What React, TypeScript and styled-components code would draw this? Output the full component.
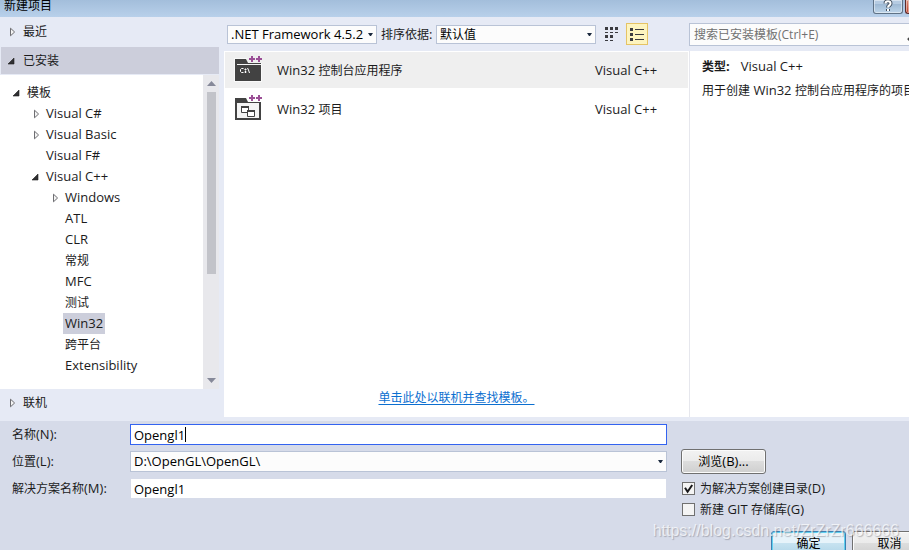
import React from "react";
import styled, { createGlobalStyle, css } from "styled-components";

const GlobalStyle = createGlobalStyle`
  *, *::before, *::after { box-sizing: border-box; }
  body {
    margin: 0;
    overflow: hidden;
    background: #d6dbe9;
  }
  body, button, input, select {
    font-family: "Open Sans", "Noto Sans CJK SC", sans-serif;
    font-size: 13px;
    line-height: 20px;
    color: #1b1b1c;
  }
`;

const Han = styled.span`
  font-size: 12px;
`;

/* Chinese runs are set one pixel smaller than Latin runs. */
function Label({ children }: { children: string }) {
  return (
    <span>
      {children.split(/([\u3000-\u9fff]+)/).map((run, i) =>
        i % 2 ? <Han key={i}>{run}</Han> : run
      )}
    </span>
  );
}

const Dialog = styled.main`
  display: flex;
  flex-direction: column;
  min-height: 100vh;
  overflow: hidden;
  white-space: nowrap;
`;

const TitleBar = styled.header`
  display: flex;
  justify-content: space-between;
  height: 17px;
  padding-left: 4px;
  overflow: hidden;
  background: linear-gradient(#a3bedb, #b8d0ea);
`;

const Title = styled.h1`
  margin: 0;
  font-size: 12px;
  font-weight: 400;
  line-height: 11px;
  color: #000;
`;

const CaptionButtons = styled.div`
  display: flex;
  gap: 2px;
`;

const CaptionButton = styled.button<{ $close?: boolean }>`
  display: flex;
  justify-content: center;
  width: ${(p) => (p.$close ? 4 : 30)}px;
  height: 14px;
  padding: 0;
  border: 1px solid ${(p) => (p.$close ? "#5c2a2a" : "#5f7286")};
  border-top: 0;
  border-right-width: ${(p) => (p.$close ? 0 : 1)}px;
  border-radius: ${(p) => (p.$close ? "0 0 0 3px" : "0 0 3px 3px")};
  background: ${(p) =>
    p.$close
      ? "linear-gradient(#d98874, #c0432c)"
      : "linear-gradient(#b5cbe2 30%, #9db8d3 30%, #bdd5ea)"};
  box-shadow: inset 0 0 0 1px rgba(255, 255, 255, 0.45);
`;

const Content = styled.div`
  display: grid;
  grid-template-columns: 224px minmax(0, 1fr) 220px;
  padding-bottom: 4px;
  background: #e6eaf5;
`;

const Sidebar = styled.nav`
  display: flex;
  flex-direction: column;
  padding-right: 5px;
`;

const Section = styled.button<{ $open?: boolean }>`
  display: flex;
  align-items: center;
  height: ${(p) => (p.$open ? 27 : 29)}px;
  margin: 0 0 1px ${(p) => (p.$open ? 1 : 0)}px;
  padding: 0 0 0 ${(p) => (p.$open ? 5 : 6)}px;
  border: 0;
  background: ${(p) => (p.$open ? "#cccedb" : "transparent")};
  gap: 3px;
`;

const Bottom = styled.div`
  display: flex;
  align-items: center;
  height: 28px;
`;

const TreePane = styled.div`
  display: flex;
  background: #fff;
`;

const Tree = styled.ul`
  flex: 1;
  margin: 0;
  padding: 7px 0 13px;
  list-style: none;
`;

const Node = styled.li<{ $level: number }>`
  display: flex;
  align-items: center;
  height: 21px;
  padding-left: ${(p) => 11 + p.$level * 19}px;
`;

const NodeName = styled.span<{ $selected?: boolean }>`
  height: 21px;
  padding: 0 2px;
  background: ${(p) => (p.$selected ? "#cccedb" : "transparent")};
`;

const ArrowBox = styled.svg`
  flex: none;
  width: 14px;
  height: 10px;
`;

function Arrow({ state }: { state?: "open" | "closed" }) {
  return (
    <ArrowBox viewBox="0 0 14 10" aria-hidden="true">
      {state === "open" && <path d="M8 2v6H2z" fill="#303033" stroke="#1e1e1e" strokeWidth=".6" />}
      {state === "closed" && <path d="M4.5 1.2v7.6L8.6 5z" fill="#f4f4f4" stroke="#6e6e72" />}
    </ArrowBox>
  );
}

const ScrollBar = styled.div`
  display: flex;
  flex-direction: column;
  align-items: center;
  width: 16px;
  background: #e8e8ec;
`;

const ScrollThumb = styled.div`
  width: 9px;
  height: 182px;
  margin-bottom: auto;
  background: #c2c3c9;
`;

const ScrollArrow = styled.svg`
  width: 9px;
  height: 17px;
  fill: #868999;
`;

const Center = styled.section`
  display: flex;
  flex-direction: column;
`;

const Toolbar = styled.div`
  display: flex;
  align-items: center;
  height: 34px;
  padding-left: 3px;
`;

const Combo = styled.div<{ $width?: number }>`
  display: grid;
  align-items: center;
  flex: none;
  width: ${(p) => (p.$width ? `${p.$width}px` : "100%")};
  > * { grid-area: 1 / 1; }
  > svg {
    justify-self: end;
    width: 5px;
    height: 3px;
    margin-right: 4px;
    fill: #1b293e;
    pointer-events: none;
  }
`;

const fieldBox = css`
  width: 100%;
  margin: 0;
  padding: 0 3px;
  border: 1px solid #b9c3d6;
  border-radius: 0;
  outline: 0;
  background: #fcfcfc;
  color: #000;
`;

const Select = styled.select<{ $han?: boolean; $tall?: boolean }>`
  ${fieldBox}
  appearance: none;
  height: ${(p) => (p.$tall ? 21 : 19)}px;
  line-height: 17px;
  font-size: ${(p) => (p.$han ? 12 : 13)}px;
`;

function DropArrow() {
  return (
    <svg viewBox="0 0 5 3" aria-hidden="true">
      <path d="M0 0h5L3 3H2z" />
    </svg>
  );
}

const SortLabel = styled.label`
  width: 59px;
  padding-left: 4px;
`;

const ViewButton = styled.button<{ $active?: boolean }>`
  display: flex;
  align-items: center;
  justify-content: center;
  width: 22px;
  height: 22px;
  margin-left: ${(p) => (p.$active ? 3 : 5)}px;
  padding: 0;
  border: 1px solid ${(p) => (p.$active ? "#e5c365" : "transparent")};
  background: ${(p) => (p.$active ? "#fdf4bf" : "transparent")};
  svg { flex: none; fill: #3b3b40; }
`;

const TemplatePane = styled.div`
  display: flex;
  flex: 1;
  flex-direction: column;
  padding: 1px 1px 9px;
  background: #fff;
`;

const TemplateList = styled.ul`
  margin: 0;
  padding: 0;
  list-style: none;
`;

const Template = styled.li<{ $selected?: boolean }>`
  display: grid;
  grid-template-columns: 52px minmax(0, 1fr) 93px;
  align-items: center;
  height: 36px;
  margin-bottom: 3px;
  background: ${(p) => (p.$selected ? "#efefef" : "transparent")};
  svg { margin-left: 9px; }
`;

const OnlineLink = styled.a`
  align-self: center;
  margin-top: auto;
  font-size: 12px;
  color: #0c6fd0;
  text-decoration: underline;
  text-underline-offset: 2px;
`;

const Details = styled.aside`
  display: flex;
  flex-direction: column;
  overflow: hidden;
`;

const SearchRow = styled.div`
  display: flex;
  align-items: center;
  height: 34px;
`;

const SearchBox = styled.div`
  display: flex;
  align-items: center;
  flex: none;
  width: 240px;
  height: 23px;
  border: 1px solid #b9c3d6;
  background: #fcfcfc;
`;

const SearchInput = styled.input`
  width: 217px;
  padding: 1px 4px 0;
  border: 0;
  outline: 0;
  background: transparent;
  font-size: 12px;
  &::placeholder { color: #717171; opacity: 1; }
`;

const Description = styled.div`
  flex: 1;
  padding: 5px 0 0 12px;
  border-left: 1px solid #e6e7ed;
  background: #fff;
  p { height: 20px; margin: 0 0 4px; }
  strong { margin-right: 11px; }
`;

const Footer = styled.form`
  display: flex;
  flex: 1;
  gap: 14px;
  height: 129px;
  background: #d6dbe9;
`;

const Fields = styled.div`
  display: grid;
  flex: 1;
  grid-template-columns: 118px minmax(0, 1fr);
  grid-auto-rows: 21px;
  row-gap: 6px;
  align-items: center;
  align-content: start;
  padding: 3px 0 0 12px;
`;

const TextInput = styled.input<{ $focused?: boolean }>`
  ${fieldBox}
  height: 21px;
  background: #fff;
  border-color: ${(p) => (p.$focused ? "#3363f0" : "#d6dbe9")};
  caret-color: transparent;
`;

const NameBox = styled.div`
  position: relative;
`;

const Caret = styled.span`
  position: absolute;
  top: 3px;
  left: 55px;
  width: 1px;
  height: 15px;
  background: #000;
`;

const Side = styled.div`
  position: relative;
  display: flex;
  flex: none;
  flex-direction: column;
  align-items: flex-start;
  width: 228px;
  padding-top: 28px;
`;

const PushButton = styled.button<{ $primary?: boolean; $wide?: boolean }>`
  flex: none;
  width: ${(p) => (p.$wide ? 85 : 75)}px;
  height: 25px;
  padding: 0;
  border: 1px solid ${(p) => (p.$primary ? "#3c7fb1" : "#707070")};
  border-radius: 3px;
  background: ${(p) =>
    p.$primary
      ? "linear-gradient(#e6f3fa 48%, #c6e2f0 50%, #b0d5e8)"
      : "linear-gradient(#f2f2f2, #ebebeb 48%, #dddddd 50%, #cfcfcf)"};
  box-shadow: inset 0 0 0 1px ${(p) => (p.$primary ? "#5fd0f0" : "#fbfbfb")};
  color: #000;
`;

const Checks = styled.div`
  margin: 4px 0 11px 1px;
`;

const Check = styled.label`
  display: flex;
  align-items: center;
  gap: 5px;
  height: 21px;
`;

const CheckInput = styled.input`
  appearance: none;
  width: 13px;
  height: 13px;
  margin: 0;
  border: 1px solid #707070;
  background: #f4f4f4;
`;

const CheckFace = styled.span`
  display: grid;
  > * { grid-area: 1 / 1; }
  > svg { display: none; pointer-events: none; }
  > input:checked + svg { display: block; }
`;

function CheckOption({ text, on }: { text: string; on?: boolean }) {
  return (
    <Check>
      <CheckFace>
        <CheckInput type="checkbox" defaultChecked={on} />
        <svg width="13" height="13" viewBox="0 0 13 13" aria-hidden="true">
          <path d="M3 5.8 5.6 9.8 10.2 3" fill="none" stroke="#17171a" strokeWidth="2" />
        </svg>
      </CheckFace>
      <Label>{text}</Label>
    </Check>
  );
}

const Actions = styled.div`
  display: flex;
  gap: 6px;
  padding-left: 90px;
`;

const Watermark = styled.span`
  position: absolute;
  right: 10px;
  top: 100px;
  font-family: "Liberation Sans", sans-serif;
  font-size: 16px;
  color: rgba(255, 255, 255, 0.7);
  text-shadow: 1px 1px 1px rgba(110, 110, 120, 0.45);
  pointer-events: none;
`;

function PlusPlus() {
  return (
    <path
      d="M17 0h2v2h2v2h-2v2h-2V4h-2V2h2zM24 0h2v2h2v2h-2v2h-2V4h-2V2h2z"
      fill="#9b4f96"
    />
  );
}

function ConsoleIcon() {
  return (
    <svg width="28" height="28" viewBox="0 0 28 28" aria-hidden="true">
      <path d="M0 2h13v5h15v19H0z" fill="#fff" opacity=".6" />
      <path d="M1 3h11l2 4h13v18H1z" fill="#424242" />
      <path d="M3 8.500h24" stroke="#f4f4f4" />
      <path d="M14 0h14v7H15z" fill="#efefef" />
      <PlusPlus />
      <path
        d="M9.500 12.500h-2l-1 1v2l1 1h2M11 13h1v1h-1zM11 15.500h1v1h-1zM13.500 12l1 2 1 3"
        fill="none"
        stroke="#fff"
      />
    </svg>
  );
}

function ProjectIcon() {
  return (
    <svg width="28" height="28" viewBox="0 0 28 28" aria-hidden="true">
      <path d="M1 3h11l2 4h13v18H1z" fill="#424242" />
      <path d="M3 8h22v15H3z" fill="#f4f4f4" />
      <path d="M14 0h14v7H15z" fill="#fff" />
      <PlusPlus />
      <path d="M7.500 11.500h7v6h-7z" fill="#fff" stroke="#424242" />
      <path d="M7 11h8v2H7z" fill="#424242" />
      <path d="M13.500 15.500h7v6h-7z" fill="#fff" stroke="#424242" />
      <path d="M13 15h8v2h-8z" fill="#424242" />
    </svg>
  );
}

type TreeItem = { name: string; level: number; state?: "open" | "closed"; selected?: boolean };

const tree: TreeItem[] = [
  { name: "模板", level: 0, state: "open" },
  { name: "Visual C#", level: 1, state: "closed" },
  { name: "Visual Basic", level: 1, state: "closed" },
  { name: "Visual F#", level: 1 },
  { name: "Visual C++", level: 1, state: "open" },
  { name: "Windows", level: 2, state: "closed" },
  { name: "ATL", level: 2 },
  { name: "CLR", level: 2 },
  { name: "常规", level: 2 },
  { name: "MFC", level: 2 },
  { name: "测试", level: 2 },
  { name: "Win32", level: 2, selected: true },
  { name: "跨平台", level: 2 },
  { name: "Extensibility", level: 2 },
];

export default function App() {
  return (
    <>
      <GlobalStyle />
      <Dialog>
        <TitleBar>
          <Title>新建项目</Title>
          <CaptionButtons>
            <CaptionButton aria-label="帮助">
              <svg width="10" height="12" viewBox="0 0 10 12" aria-hidden="true">
                <path d="M2.500 3.500C2.500.5 7.500.5 7.500 3.500 7.500 5.500 5 5.300 5 7.500M5 9v2" fill="none" stroke="#43505f" strokeWidth="4" />
                <path d="M2.500 3.500C2.500.5 7.500.5 7.500 3.500 7.500 5.500 5 5.300 5 7.500M5 9v2" fill="none" stroke="#fff" strokeWidth="2" />
              </svg>
            </CaptionButton>
            <CaptionButton $close aria-label="关闭" />
          </CaptionButtons>
        </TitleBar>

        <Content>
          <Sidebar>
            <Section>
              <Arrow state="closed" />
              <Label>最近</Label>
            </Section>
            <Section $open>
              <Arrow state="open" />
              <Label>已安装</Label>
            </Section>
            <TreePane>
              <Tree>
                {tree.map((item) => (
                  <Node key={item.name} $level={item.level}>
                    <Arrow state={item.state} />
                    <NodeName $selected={item.selected}>
                      <Label>{item.name}</Label>
                    </NodeName>
                  </Node>
                ))}
              </Tree>
              <ScrollBar>
                <ScrollArrow viewBox="0 0 9 17">
                  <path d="M0 11h9L4.500 6z" />
                </ScrollArrow>
                <ScrollThumb />
                <ScrollArrow viewBox="0 0 9 17">
                  <path d="M0 6h9L4.500 11z" />
                </ScrollArrow>
              </ScrollBar>
            </TreePane>
            <Bottom>
              <Section>
                <Arrow state="closed" />
                <Label>联机</Label>
              </Section>
            </Bottom>
          </Sidebar>

          <Center>
            <Toolbar>
              <Combo $width={150}>
                <Select aria-label="框架版本">
                  <option>.NET Framework 4.5.2</option>
                </Select>
                <DropArrow />
              </Combo>
              <SortLabel htmlFor="sort">
                <Label>排序依据:</Label>
              </SortLabel>
              <Combo $width={160}>
                <Select id="sort" $han>
                  <option>默认值</option>
                </Select>
                <DropArrow />
              </Combo>
              <ViewButton aria-label="中等图标">
                <svg width="14" height="14" viewBox="0 0 14 14">
                  <path d="M0 0h3v3H0zM5 0h3v3H5zM10 0h3v3h-3zM0 5h3v1H0zM5 5h3v1H5zM10 5h3v1h-3zM0 8h3v3H0zM5 8h3v3H5zM0 13h3v1H0zM5 13h3v1H5z" />
                </svg>
              </ViewButton>
              <ViewButton $active aria-label="小图标">
                <svg width="14" height="13" viewBox="0 0 14 13">
                  <path d="M0 0h3v3H0zM5 1h9v1H5zM0 5h3v3H0zM5 6h9v1H5zM0 10h3v3H0zM5 11h9v1H5z" />
                </svg>
              </ViewButton>
            </Toolbar>
            <TemplatePane>
              <TemplateList>
                <Template $selected>
                  <ConsoleIcon />
                  <Label>Win32 控制台应用程序</Label>
                  <Label>Visual C++</Label>
                </Template>
                <Template>
                  <ProjectIcon />
                  <Label>Win32 项目</Label>
                  <Label>Visual C++</Label>
                </Template>
              </TemplateList>
              <OnlineLink href="#">单击此处以联机并查找模板。</OnlineLink>
            </TemplatePane>
          </Center>

          <Details>
            <SearchRow>
              <SearchBox>
                <SearchInput type="search" aria-label="搜索" placeholder="搜索已安装模板(Ctrl+E)" />
                <svg width="14" height="14" viewBox="0 0 14 14" aria-hidden="true">
                  <path d="M1 13l5-5" stroke="#424242" strokeWidth="2.500" />
                  <circle cx="9" cy="5" r="3.500" fill="none" stroke="#424242" strokeWidth="1.500" />
                </svg>
              </SearchBox>
            </SearchRow>
            <Description>
              <p>
                <strong>
                  <Label>类型:</Label>
                </strong>
                Visual C++
              </p>
              <p>
                <Label>用于创建 Win32 控制台应用程序的项目</Label>
              </p>
            </Description>
          </Details>
        </Content>

        <Footer onSubmit={(e) => e.preventDefault()}>
          <Fields>
            <label htmlFor="name">
              <Label>名称(N):</Label>
            </label>
            <NameBox>
              <TextInput id="name" $focused defaultValue="Opengl1" />
              <Caret />
            </NameBox>
            <label htmlFor="location">
              <Label>位置(L):</Label>
            </label>
            <Combo>
              <Select id="location" $tall>
                <option>D:\OpenGL\OpenGL\</option>
              </Select>
              <DropArrow />
            </Combo>
            <label htmlFor="solution">
              <Label>解决方案名称(M):</Label>
            </label>
            <TextInput id="solution" defaultValue="Opengl1" />
          </Fields>
          <Side>
            <PushButton type="button" $wide>
              <Label>浏览(B)...</Label>
            </PushButton>
            <Checks>
              <CheckOption text="为解决方案创建目录(D)" on />
              <CheckOption text="新建 GIT 存储库(G)" />
            </Checks>
            <Actions>
              <PushButton type="submit" $primary>
                <Label>确定</Label>
              </PushButton>
              <PushButton type="button">
                <Label>取消</Label>
              </PushButton>
            </Actions>
            <Watermark>https://blog.csdn.net/ZrZrZr666666</Watermark>
          </Side>
        </Footer>
      </Dialog>
    </>
  );
}
